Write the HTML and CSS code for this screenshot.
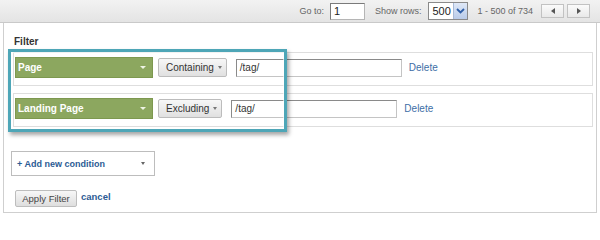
FILE: index.html
```html
<!DOCTYPE html>
<html>
<head>
<meta charset="utf-8">
<link rel="stylesheet" href="styles.css">
</head>
<body>
<div class="topbar">
  <span class="tb-label">Go to:</span>
  <span class="goto-input">1</span>
  <span class="tb-label rows-label">Show rows:</span>
  <span class="rows-select"><span class="rows-val">500</span><span class="rows-btn"><svg width="9" height="6" viewBox="0 0 9 6"><path d="M1 1 L4.5 4.5 L8 1" fill="none" stroke="#2f5fa8" stroke-width="1.8"/></svg></span></span>
  <span class="tb-label range">1 - 500 of 734</span>
  <span class="pager"><svg width="4" height="6" viewBox="0 0 4 6"><path d="M4 0 L0 3 L4 6 Z" fill="#555"/></svg></span>
  <span class="pager"><svg width="4" height="6" viewBox="0 0 4 6"><path d="M0 0 L4 3 L0 6 Z" fill="#555"/></svg></span>
</div>
<div class="panel">
  <div class="filter-label">Filter</div>
  <div class="cond-row">
    <div class="dim-select wide"><span>Page</span><span class="dim-arrow"></span></div>
    <div class="match-btn">Containing<span class="btn-arrow"></span></div>
    <div class="value-input w1">/tag/</div>
    <a class="link delete">Delete</a>
  </div>
  <div class="cond-row second">
    <div class="dim-select wide"><span>Landing Page</span><span class="dim-arrow"></span></div>
    <div class="match-btn">Excluding<span class="btn-arrow"></span></div>
    <div class="value-input w1">/tag/</div>
    <a class="link delete">Delete</a>
  </div>
  <div class="add-cond"><span>+ Add new condition</span><span class="add-arrow"></span></div>
  <div class="actions">
    <div class="apply-btn">Apply Filter</div>
    <a class="link cancel">cancel</a>
  </div>
  <div class="highlight"></div>
</div>
</body>
</html>
```

FILE: styles.css
```css
html, body {
  margin: 0;
  padding: 0;
  background: #fff;
}
body {
  width: 600px;
  height: 217px;
  overflow: hidden;
  font-family: "Liberation Sans", Arial, sans-serif;
  color: #333;
  position: relative;
}
.topbar {
  height: 22px;
  border-bottom: 1px solid #c9c9c9;
  background: linear-gradient(#f2f2f2, #e4e4e4);
  display: flex;
  justify-content: flex-end;
  align-items: center;
  padding-right: 10px;
  font-size: 9px;
  color: #666;
}
.tb-label {
  white-space: nowrap;
}
.goto-input {
  box-sizing: border-box;
  width: 35px;
  height: 17px;
  margin-left: 6px;
  border: 1px solid #8a8a8a;
  border-color: #7a7a7a #b5b5b5 #b5b5b5 #7a7a7a;
  background: #fff;
  font-size: 11px;
  color: #222;
  line-height: 15px;
  padding-left: 3px;
}
.rows-label {
  margin-left: 10px;
}
.rows-select {
  box-sizing: border-box;
  width: 40px;
  height: 18px;
  margin-left: 7px;
  border: 1px solid #8a8a8a;
  background: #fff;
  display: flex;
  align-items: stretch;
}
.rows-val {
  flex: 1;
  font-size: 11px;
  color: #222;
  line-height: 16px;
  padding-left: 3px;
}
.rows-btn {
  width: 13px;
  background: linear-gradient(#dfe8f7, #b9cbe9);
  border-left: 1px solid #a8b9d6;
  display: flex;
  align-items: center;
  justify-content: center;
}
.range {
  margin-left: 9px;
  margin-right: 5px;
}
.pager {
  box-sizing: border-box;
  width: 23px;
  height: 14px;
  margin-left: 3px;
  border: 1px solid #c2c2c2;
  background: linear-gradient(#fbfbfb, #e9e9e9);
  display: flex;
  align-items: center;
  justify-content: center;
}
.panel {
  box-sizing: border-box;
  margin: 0 3px;
  height: 190px;
  border: 1px solid #cfcfcf;
  border-top: none;
  padding: 13px 3px 0 9px;
}
.filter-label {
  font-size: 10px;
  font-weight: bold;
  line-height: 12px;
  padding-left: 1px;
  color: #333;
  margin-bottom: 4px;
}
.cond-row {
  box-sizing: border-box;
  height: 34px;
  border: 1px solid #dedede;
  padding: 4px 0 7px 1px;
  display: flex;
  align-items: center;
}
.cond-row.second {
  margin-top: 7px;
}
.dim-select {
  box-sizing: border-box;
  width: 138px;
  height: 21px;
  background: #8ca75f;
  border: 1px solid #7d984f;
  color: #fff;
  font-size: 10px;
  font-weight: bold;
  display: flex;
  align-items: center;
  justify-content: space-between;
  padding: 0 6px 0 2px;
}
.dim-arrow {
  width: 0;
  height: 0;
  border-left: 3px solid transparent;
  border-right: 3px solid transparent;
  border-top: 3px solid #eef3e4;
}
.match-btn {
  box-sizing: border-box;
  height: 19px;
  margin-left: 5px;
  border: 1px solid #bcbcbc;
  border-radius: 2px;
  background: linear-gradient(#f7f7f7, #e0e0e0);
  font-size: 10px;
  color: #333;
  display: flex;
  align-items: center;
  padding: 0 4px 0 7px;
}
.btn-arrow {
  width: 0;
  height: 0;
  margin-left: 4px;
  border-left: 2.5px solid transparent;
  border-right: 2.5px solid transparent;
  border-top: 3px solid #777;
}
.value-input {
  box-sizing: border-box;
  width: 166px;
  height: 18px;
  margin-left: 9px;
  border: 1px solid #9a9a9a;
  border-color: #8a8a8a #c4c4c4 #c4c4c4 #8a8a8a;
  background: #fff;
  font-size: 10px;
  color: #333;
  line-height: 16px;
  padding-left: 3px;
}
.link {
  color: #3d6ea6;
  cursor: pointer;
}
.delete {
  font-size: 10px;
  margin-left: 7px;
}
.add-cond {
  box-sizing: border-box;
  width: 144px;
  height: 25px;
  margin-top: 24px;
  margin-left: -2px;
  border: 1px solid #bdbdbd;
  background: #fff;
  display: flex;
  align-items: center;
  justify-content: space-between;
  padding: 0 9px 0 5px;
  font-size: 9px;
  font-weight: bold;
  color: #2c5b94;
}
.add-arrow {
  width: 0;
  height: 0;
  border-left: 2.5px solid transparent;
  border-right: 2.5px solid transparent;
  border-top: 3px solid #666;
}
.actions {
  display: flex;
  align-items: center;
  margin-top: 14px;
  margin-left: 2px;
}
.apply-btn {
  box-sizing: border-box;
  width: 62px;
  height: 17px;
  border: 1px solid #bdbdbd;
  border-radius: 2px;
  background: linear-gradient(#f7f7f7, #dedede);
  font-size: 9.5px;
  color: #444;
  display: flex;
  align-items: center;
  justify-content: center;
}
.cancel {
  font-size: 9.5px;
  font-weight: bold;
  margin-left: 4px;
  margin-top: -5px;
  color: #2c5b94;
}
.highlight {
  position: absolute;
  left: 8px;
  top: 49px;
  width: 279px;
  height: 83px;
  box-sizing: border-box;
  border: 3px solid #4ea6b7;
  box-shadow: 2px 3px 4px rgba(0, 0, 0, 0.35), inset 0 0 0 1px rgba(255,255,255,0.6);
  pointer-events: none;
}
```
